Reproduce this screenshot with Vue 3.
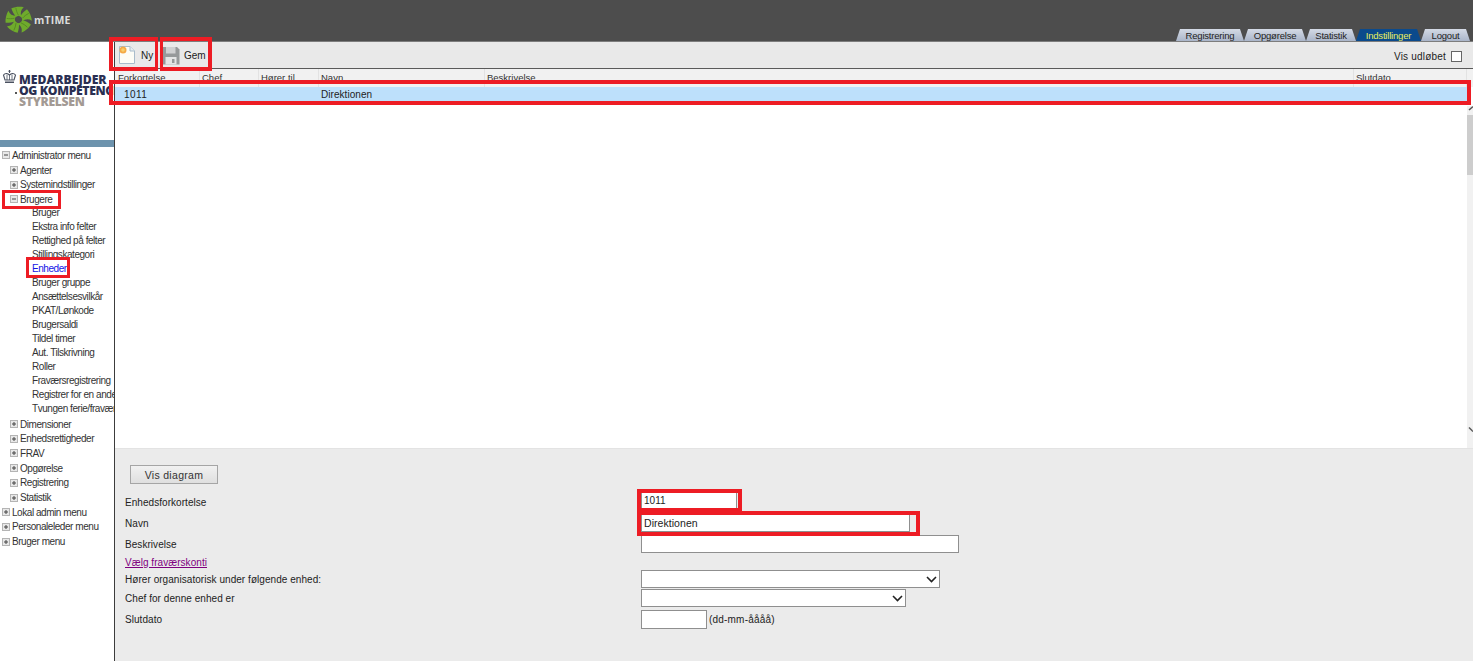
<script setup>
const tabs = [
  { label: 'Registrering', w: 68 },
  { label: 'Opgørelse', w: 62 },
  { label: 'Statistik', w: 50 },
  { label: 'Indstillinger', w: 65, active: true },
  { label: 'Logout', w: 49 }
]
const columns = [
  { label: 'Forkortelse', w: 85 },
  { label: 'Chef', w: 59 },
  { label: 'Hører til', w: 60 },
  { label: 'Navn', w: 166 },
  { label: 'Beskrivelse', w: 869 },
  { label: 'Slutdato', w: 113 }
]
const beforeChildren = [
  { label: 'Administrator menu', level: 0, icon: 'minus' },
  { label: 'Agenter', level: 1, icon: 'plus' },
  { label: 'Systemindstillinger', level: 1, icon: 'plus' },
  { label: 'Brugere', level: 1, icon: 'minus' }
]
const children = ['Bruger', 'Ekstra info felter', 'Rettighed på felter', 'Stillingskategori', 'Enheder', 'Bruger gruppe', 'Ansættelsesvilkår', 'PKAT/Lønkode', 'Brugersaldi', 'Tildel timer', 'Aut. Tilskrivning', 'Roller', 'Fraværsregistrering', 'Registrer for en anden', 'Tvungen ferie/fravær']
const afterChildren = [
  { label: 'Dimensioner', level: 1 },
  { label: 'Enhedsrettigheder', level: 1 },
  { label: 'FRAV', level: 1 },
  { label: 'Opgørelse', level: 1 },
  { label: 'Registrering', level: 1 },
  { label: 'Statistik', level: 1 },
  { label: 'Lokal admin menu', level: 0 },
  { label: 'Personaleleder menu', level: 0 },
  { label: 'Bruger menu', level: 0 }
]
const marks = [
  { name: 'ny', x: 109, y: 37, w: 49, h: 34, b: '4px 3px 4px 4px' },
  { name: 'gem', x: 160, y: 37, w: 52, h: 34, b: '4px 4px 4px 3px' },
  { name: 'row', x: 109, y: 80, w: 1362, h: 25, b: '4px' },
  { name: 'brugere', x: 2, y: 190, w: 59, h: 19, b: '3px' },
  { name: 'enheder', x: 26, y: 257, w: 44, h: 21, b: '3px' },
  { name: 'code', x: 637, y: 489, w: 105, h: 23, b: '4px' },
  { name: 'navn', x: 637, y: 511, w: 283, h: 25, b: '4px' }
]
const arms = [0, 72, 144, 216, 288]
</script>

<template>
  <div class="page">
    <header class="top">
      <div class="brand">
        <svg class="star" width="27" height="27" viewBox="0 0 36 36">
          <g v-for="a in arms" :key="a" :transform="`rotate(${a} 18 18)`">
            <path d="M14.500 14.500 C12 11 9.500 7 8.500 3 C13 0.800 20 0.300 25 1.500 C21 5 20 9 22 14.500 C19 12.500 16.500 13 14.500 14.500 Z" fill="#6fab2c" />
            <path d="M18 12.500 C16 9 15 6 14.500 2.500" stroke="#4f7f22" stroke-width="0.900" fill="none" />
          </g>
        </svg>
        <span class="brand-name">mTIME</span>
      </div>
      <nav class="tabs">
        <div v-for="t in tabs" :key="t.label" class="tab" :class="{ active: t.active }" :style="{ width: t.w + 'px' }">{{ t.label }}</div>
      </nav>
    </header>

    <div class="body">
      <aside class="side">
        <div class="logo">
          <svg class="crown" width="15" height="16" viewBox="0 0 15 16">
            <path d="M1.500 6 C3.500 3.500 6 4.500 7.500 6 C9 4.500 11.500 3.500 13.500 6 L12 11 H3Z" fill="none" stroke="#4a5160" stroke-width="1.100" />
            <path d="M5 5.500 V11 M7.500 6 V11 M10 5.500 V11" stroke="#4a5160" stroke-width="0.800" />
            <path d="M7.500 1 V4 M6.300 2.200 H8.700" stroke="#4a5160" stroke-width="1" />
            <path d="M3 12.500 H12 V14 H3Z" fill="#4a5160" />
          </svg>
          <div class="logo-text">
            <div>MEDARBEJDER</div>
            <div class="logo-second">OG KOMPETENCE</div>
            <div class="logo-grey">STYRELSEN</div>
          </div>
          <span class="logo-dot"></span>
        </div>
        <div class="strip"></div>
        <ul class="tree">
          <li v-for="n in beforeChildren" :key="n.label" class="node" :class="'lv' + n.level">
            <svg class="box" width="8" height="8" viewBox="0 0 8 8">
              <rect x="0.500" y="0.500" width="7" height="7" fill="#e8e8e8" stroke="#b4b4b4" />
              <path :d="n.icon === 'plus' ? 'M2 4H6M4 2V6' : 'M2 4H6'" stroke="#444" stroke-width="1" />
            </svg>
            {{ n.label }}
          </li>
          <li v-for="c in children" :key="c" class="leaf" :class="{ current: c === 'Enheder' }">{{ c }}</li>
          <li v-for="n in afterChildren" :key="n.label" class="node" :class="'lv' + n.level">
            <svg class="box" width="8" height="8" viewBox="0 0 8 8">
              <rect x="0.500" y="0.500" width="7" height="7" fill="#e8e8e8" stroke="#b4b4b4" />
              <path d="M2 4H6M4 2V6" stroke="#444" stroke-width="1" />
            </svg>
            {{ n.label }}
          </li>
        </ul>
      </aside>

      <main class="main">
        <div class="toolbar">
          <div class="tool tool-ny">
            <svg width="18" height="20" viewBox="0 0 18 20">
              <path d="M1.500 1.500 H12 L16.500 6 V18.500 H1.500Z" fill="#fdfdf6" stroke="#a9bccb" />
              <path d="M12 1.500 V6 H16.500" fill="#e6edf2" stroke="#a9bccb" />
              <circle cx="5" cy="5" r="3.500" fill="#f5a945" />
              <circle cx="5" cy="5" r="1.800" fill="#f7d06c" />
            </svg>
            <span>Ny</span>
          </div>
          <div class="tool tool-gem">
            <svg width="18" height="19" viewBox="0 0 18 19">
              <path d="M0.500 1 H15 L17.500 3.500 V18.500 H0.500Z" fill="#96999a" />
              <rect x="4" y="1" width="9.500" height="6.500" fill="#cfd0d1" />
              <rect x="3.500" y="11" width="11" height="7.500" fill="#e4e5e5" />
              <rect x="10" y="13" width="2.500" height="4" fill="#96999a" />
            </svg>
            <span>Gem</span>
          </div>
          <label class="expired">Vis udløbet <span class="check"></span></label>
        </div>

        <section class="list">
          <div class="thead">
            <div v-for="c in columns" :key="c.label" class="th" :style="{ width: c.w + 'px' }">{{ c.label }}</div>
          </div>
          <div class="row">
            <span class="cell-code">1011</span>
            <span class="cell-name">Direktionen</span>
          </div>
          <div class="scroll">
            <svg class="chev chev-up" width="6" height="8" viewBox="0 0 6 8"><path d="M1 5 L5 1.500" stroke="#555" stroke-width="1.500" fill="none" /></svg>
            <div class="thumb"></div>
            <svg class="chev chev-down" width="6" height="8" viewBox="0 0 6 8"><path d="M1 1.500 L5 5.500" stroke="#555" stroke-width="1.500" fill="none" /></svg>
          </div>
        </section>

        <section class="form">
          <button class="diagram" type="button">Vis diagram</button>
          <div class="grid">
            <div class="lab first">Enhedsforkortelse</div>
            <div class="ctl"><div class="inp w96 short">1011</div></div>
            <div class="lab">Navn</div>
            <div class="ctl"><div class="inp w269">Direktionen</div></div>
            <div class="lab">Beskrivelse</div>
            <div class="ctl"><div class="inp w318"></div></div>
            <div class="lab"><a class="link">Vælg fraværskonti</a></div>
            <div class="ctl"></div>
            <div class="lab">Hører organisatorisk under følgende enhed:</div>
            <div class="ctl">
              <div class="inp w299 sel"><svg width="11" height="7" viewBox="0 0 11 7"><path d="M1 1 L5.500 5.500 L10 1" stroke="#222" stroke-width="1.600" fill="none" /></svg></div>
            </div>
            <div class="lab">Chef for denne enhed er</div>
            <div class="ctl">
              <div class="inp w265 sel"><svg width="11" height="7" viewBox="0 0 11 7"><path d="M1 1 L5.500 5.500 L10 1" stroke="#222" stroke-width="1.600" fill="none" /></svg></div>
            </div>
            <div class="lab">Slutdato</div>
            <div class="ctl date"><div class="inp w66"></div><span>(dd-mm-åååå)</span></div>
          </div>
        </section>
      </main>
    </div>

    <div v-for="m in marks" :key="m.name" class="mark" :style="{ left: m.x + 'px', top: m.y + 'px', width: m.w + 'px', height: m.h + 'px', borderWidth: m.b }"></div>
  </div>
</template>

<style>
html, body { margin: 0; padding: 0; overflow: hidden; background: #fff; }
</style>

<style scoped>
.page {
  position: relative;
  width: 1473px;
  height: 661px;
  overflow: hidden;
  display: flex;
  flex-direction: column;
  font-family: "Liberation Sans", Arial, sans-serif;
  font-size: 10px;
  color: #222;
}
.top {
  height: 41px;
  flex: none;
  background: #4d4d4d;
  display: flex;
  justify-content: space-between;
  align-items: flex-end;
  border-bottom: 1px solid #7d7d7d;
  box-sizing: content-box;
}
.brand {
  align-self: flex-start;
  display: flex;
  align-items: center;
  padding: 6px 0 0 5px;
}
.brand-name {
  margin-left: 2px;
  font-family: "Open Sans", sans-serif;
  font-weight: 700;
  font-size: 10.500px;
  letter-spacing: 0.200px;
  color: #dcdcdc;
}
.tabs { display: flex; padding-right: 3px; }
.tab {
  height: 12px;
  line-height: 14px;
  text-align: center;
  font-size: 9.500px;
  letter-spacing: -0.200px;
  color: #222;
  background: linear-gradient(#d4dae5, #aab5c9);
  clip-path: polygon(4px 0, calc(100% - 4px) 0, 100% 100%, 0 100%);
  overflow: hidden;
}
.tab.active { background: #0b4a8c; color: #e8ee5c; }

.body { flex: 1; min-height: 0; display: flex; }
.side {
  width: 114px;
  flex: none;
  overflow: hidden;
  border-right: 1px solid #3c3c3c;
  background: #fff;
}
.logo {
  position: relative;
  height: 98px;
  box-sizing: border-box;
  padding: 27px 0 0 2px;
  display: flex;
  white-space: nowrap;
}
.crown { flex: none; }
.logo-text {
  margin-left: 2px;
  margin-top: 5px;
  font-family: "Open Sans", sans-serif;
  font-weight: 800;
  font-size: 12.200px;
  line-height: 11px;
  color: #2a2f52;
}
.logo-second { letter-spacing: -0.350px; }
.logo-grey { color: #a39a94; letter-spacing: -0.300px; }
.logo-dot {
  position: absolute;
  left: 15px;
  top: 50px;
  width: 2px;
  height: 2px;
  background: #555;
}
.strip { height: 7px; background: #6d93ad; }
.tree {
  list-style: none;
  margin: 0;
  padding: 1px 0 0;
  white-space: nowrap;
  letter-spacing: -0.450px;
  color: #333;
}
.node {
  height: 14.700px;
  line-height: 15px;
  display: flex;
  align-items: center;
}
.lv0 { padding-left: 2px; }
.lv1 { padding-left: 10px; }
.box { margin-right: 2px; flex: none; }
.leaf {
  height: 14px;
  line-height: 14px;
  padding-left: 32px;
  position: relative;
  top: -1px;
}
.current { color: #1414e6; }

.main { flex: 1; min-width: 0; display: flex; flex-direction: column; background: #fff; }
.toolbar {
  height: 26px;
  flex: none;
  background: #e9e9e9;
  border-bottom: 1px solid #5a5a5a;
  display: flex;
  align-items: center;
  font-size: 10px;
}
.tool { display: flex; align-items: center; height: 26px; }
.tool-ny { margin-left: 3px; width: 44px; }
.tool-ny span { margin-left: 5px; }
.tool-gem span { margin-left: 4px; }
.expired {
  margin-left: auto;
  margin-right: 11px;
  display: flex;
  align-items: center;
  font-size: 10px;
  letter-spacing: 0.200px;
  padding-top: 3px;
}
.check {
  width: 9px;
  height: 9px;
  margin-left: 5px;
  border: 1px solid #666;
  background: #fff;
  display: block;
}

.list { position: relative; height: 379px; flex: none; background: #fff; overflow: hidden; }
.thead {
  height: 18px;
  display: flex;
  background: #f1f1f1;
}
.th {
  box-sizing: border-box;
  padding: 3px 0 0 2px;
  border-right: 1px solid #e2e2e2;
  font-size: 9.500px;
  line-height: 12px;
  color: #333;
  overflow: hidden;
  white-space: nowrap;
}
.th:first-child { padding-left: 3px; }
.row {
  height: 14px;
  margin-right: 4px;
  background: #bde0fb;
  display: flex;
  align-items: center;
  font-size: 10px;
}
.cell-code { margin-left: 9px; width: 197px; letter-spacing: 0.400px; }
.cell-name { letter-spacing: 0.050px; }
.scroll {
  position: absolute;
  right: 0;
  top: 37px;
  bottom: 0;
  width: 6px;
  background: #f1f1f1;
}
.thumb { position: absolute; top: 9px; left: 0; width: 6px; height: 60px; background: #cdcdcd; }
.chev { position: absolute; left: 1px; display: block; }
.chev-up { top: -1px; }
.chev-down { bottom: 14px; }

.form {
  flex: 1;
  background: #ebebeb;
  border-top: 1px solid #e3e3e3;
  padding: 16px 0 0 10px;
  font-size: 10px;
  letter-spacing: 0.050px;
}
.diagram {
  display: block;
  margin: 0 0 0 5px;
  width: 88px;
  height: 19px;
  padding: 0;
  font-family: "Liberation Sans", Arial, sans-serif;
  font-size: 10.500px;
  letter-spacing: 0.300px;
  color: #333;
  background: linear-gradient(#f1f1f1, #dfdfdf);
  border: 1px solid #a5a5a5;
  border-radius: 0;
}
.grid {
  margin-top: 6px;
  display: grid;
  grid-template-columns: 516px 1fr;
  grid-template-rows: 22px 22px 20px 16px 18px 20px 22px;
}
.lab { display: flex; align-items: center; color: #222; white-space: nowrap; }
.lab.first { padding-top: 2px; box-sizing: border-box; }
.link { color: #800080; text-decoration: underline; }
.ctl { display: flex; align-items: center; }
.inp {
  box-sizing: border-box;
  height: 18px;
  background: #fff;
  border: 1px solid #8f8f8f;
  padding-left: 2px;
  line-height: 16px;
  font-size: 10.500px;
  display: flex;
  align-items: center;
}
.short { font-size: 10px; }
.w96 { width: 96px; }
.w269 { width: 269px; }
.w318 { width: 318px; }
.w299 { width: 299px; }
.w265 { width: 265px; }
.w66 { width: 66px; height: 19px; }
.sel { justify-content: flex-end; padding-right: 2px; }
.date span { margin-left: 2px; font-size: 10px; letter-spacing: 0.200px; }
.mark {
  position: absolute;
  box-sizing: border-box;
  border: 4px solid #ed1c24;
  pointer-events: none;
}
</style>
